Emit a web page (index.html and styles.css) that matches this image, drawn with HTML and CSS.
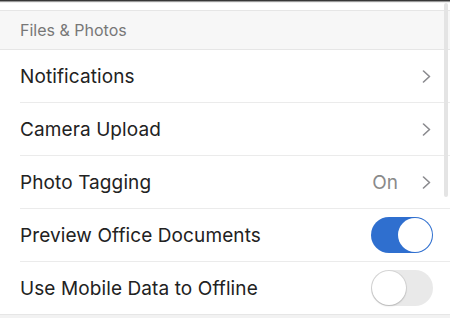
FILE: index.html
```html
<!DOCTYPE html>
<html>

<head>
    <meta charset="utf-8" />
    <title>Settings</title>
    <link rel="stylesheet" href="styles.css">
</head>

<body>
    <div class="screen">
        <div class="top-edge"></div>
        <div class="section-header">Files &amp; Photos</div>
        <div class="list">
            <div class="row">
                <div class="row-inner">
                    <span class="row-label">Notifications</span>
                    <svg class="chevron" width="9" height="13" viewBox="0 0 9 13"><path d="M1.5 1 L7.5 6.5 L1.5 12" /></svg>
                </div>
            </div>
            <div class="row">
                <div class="row-inner">
                    <span class="row-label">Camera Upload</span>
                    <svg class="chevron" width="9" height="13" viewBox="0 0 9 13"><path d="M1.5 1 L7.5 6.5 L1.5 12" /></svg>
                </div>
            </div>
            <div class="row">
                <div class="row-inner">
                    <span class="row-label">Photo Tagging</span>
                    <span class="row-value">On</span>
                    <svg class="chevron" width="9" height="13" viewBox="0 0 9 13"><path d="M1.5 1 L7.5 6.5 L1.5 12" /></svg>
                </div>
            </div>
            <div class="row">
                <div class="row-inner toggle-row">
                    <span class="row-label">Preview Office Documents</span>
                    <span class="toggle toggle-on"><span class="knob"></span></span>
                </div>
            </div>
            <div class="row last">
                <div class="row-inner toggle-row">
                    <span class="row-label">Use Mobile Data to Offline</span>
                    <span class="toggle"><span class="knob"></span></span>
                </div>
            </div>
        </div>
        <!-- scroll indicator -->
        <div class="scroll-thumb"></div>
    </div>
</body>

</html>
```

FILE: styles.css
```css
* {
    box-sizing: border-box;
    margin: 0;
    padding: 0;
}

body {
    font-family: 'Inter', 'Noto Sans', sans-serif;
    background-color: #f2f2f2;
}

.screen {
    position: relative;
    width: 450px;
    height: 318px;
    overflow: hidden;
    background-color: #f2f2f2;
}

.top-edge {
    height: 10px;
    background: linear-gradient(#1a1a1a 0px, #555 1px, #dcdcdc 2px, #ffffff 3px);
}

.section-header {
    height: 40px;
    padding-left: 20px;
    display: flex;
    align-items: center;
    font-size: 16px;
    color: #777777;
    background-color: #f7f7f7;
    border-top: 1px solid #e6e6e6;
    border-bottom: 1px solid #e6e6e6;
}

.list {
    background-color: #ffffff;
    border-bottom: 1px solid #e6e6e6;
}

.row {
    padding-left: 20px;
}

.row-inner {
    height: 53px;
    display: flex;
    align-items: center;
    padding-right: 19px;
    border-bottom: 1px solid #ebebeb;
}

.last .row-inner {
    border-bottom: none;
    height: 52px;
}

.toggle-row {
    padding-right: 17px;
}

.row-label {
    flex: 1;
    font-size: 19px;
    letter-spacing: 0.1px;
    color: #222222;
}

.row-value {
    font-size: 19px;
    color: #8a8a8a;
    margin-right: 24px;
}

.chevron path {
    fill: none;
    stroke: #8a8a8e;
    stroke-width: 1.6;
    stroke-linecap: round;
    stroke-linejoin: round;
}

.toggle {
    display: flex;
    align-items: center;
    width: 62px;
    height: 36px;
    padding: 1px;
    border-radius: 18px;
    background-color: #e9e9e9;
}

.toggle-on {
    background-color: #2f6fcf;
    justify-content: flex-end;
}

.knob {
    width: 34px;
    height: 34px;
    border-radius: 50%;
    background-color: #ffffff;
    box-shadow: 0 0 0 1px rgba(0, 0, 0, 0.08), 0 1px 2px rgba(0, 0, 0, 0.15);
}

.toggle-on .knob {
    box-shadow: none;
}

.scroll-thumb {
    position: absolute;
    top: 3px;
    right: 2px;
    width: 4px;
    height: 194px;
    border-radius: 2px;
    background-color: #e4e4e4;
}
```
